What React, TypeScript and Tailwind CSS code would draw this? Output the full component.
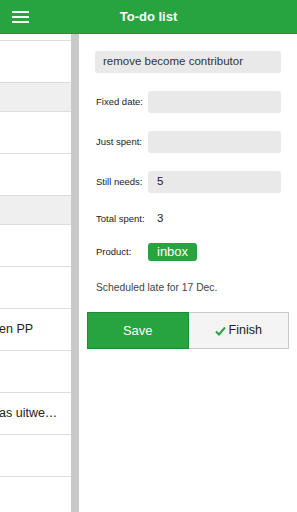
import React from "react";

type Row = { kind: "item" | "section"; text?: string };

const rows: Row[] = [
  { kind: "item" },
  { kind: "section" },
  { kind: "item" },
  { kind: "item" },
  { kind: "section" },
  { kind: "item" },
  { kind: "item" },
  { kind: "item", text: "en PP" },
  { kind: "item" },
  { kind: "item", text: "as uitwe…" },
  { kind: "item" },
  { kind: "item" },
  { kind: "item" },
];

const FieldRow: React.FC<{ label: string; value?: string; boxed?: boolean; className?: string }> = ({
  label,
  value,
  boxed,
  className = "",
}) => (
  <div className={`flex items-center h-[22px] ${className}`}>
    <div className="w-[53px] shrink-0 pl-[1px] text-[9.5px] text-[#222]">{label}</div>
    {boxed ? (
      <div className="flex-1 h-[22px] rounded-[3px] bg-[#e9e9e9] pl-[9px] flex items-center text-[11.5px] text-[#222]">
        {value}
      </div>
    ) : (
      <div className="pl-[9px] text-[11.5px] text-[#222]">{value}</div>
    )}
  </div>
);

export default function App() {
  return (
    <div className="w-[297px] h-[512px] flex flex-col overflow-hidden bg-white font-['Liberation_Sans',Arial,sans-serif]">
      {/* Header */}
      <header className="relative h-[34px] shrink-0 bg-[#27a33f] border-b border-[#23933a] flex items-center justify-center">
        <div className="absolute left-[12px] top-[11px] flex flex-col gap-[3px]">
          <span className="block w-[17px] h-[2px] bg-white" />
          <span className="block w-[17px] h-[2px] bg-white" />
          <span className="block w-[17px] h-[2px] bg-white" />
        </div>
        <span className="text-white text-[13px] font-bold">To-do list</span>
      </header>

      <div className="flex flex-1 min-h-0">
        {/* List */}
        <div className="w-[71px] shrink-0 overflow-hidden">
          <div className="h-[7px] border-b border-[#dddddd]" />
          {rows.map((r, i) =>
            r.kind === "section" ? (
              <div key={i} className="h-[29px] bg-[#efefef] border-b border-[#dddddd]" />
            ) : (
              <div
                key={i}
                className="h-[42px] border-b border-[#dddddd] flex items-center whitespace-nowrap text-[12.5px] text-[#222] -ml-[1px]"
              >
                {r.text}
              </div>
            )
          )}
        </div>

        {/* Separator */}
        <div className="w-[8px] shrink-0 bg-[#c9c9c9]" />

        {/* Detail panel */}
        <div className="flex-1 px-4 pt-[17px]">
          <div className="h-[22px] rounded-[3px] bg-[#e9e9e9] pl-[8px] flex items-center text-[11.5px] text-[#333]">
            remove become contributor
          </div>
          <FieldRow label="Fixed date:" boxed className="mt-[18px]" />
          <FieldRow label="Just spent:" boxed className="mt-[18px]" />
          <FieldRow label="Still needs:" value="5" boxed className="mt-[18px]" />
          <FieldRow label="Total spent:" value="3" className="mt-[15px]" />
          <div className="flex items-center h-[22px] mt-[11px]">
            <div className="w-[53px] shrink-0 pl-[1px] text-[9.5px] text-[#222]">Product:</div>
            <span className="h-[18px] px-[9px] rounded-[3px] bg-[#27a33f] text-white text-[13px] flex items-center">
              inbox
            </span>
          </div>
          <div className="mt-[18px] pl-[1px] h-[14px] leading-[14px] text-[10.3px] text-[#444]">
            Scheduled late for 17 Dec.
          </div>
          <div className="-mx-2 mt-[17px] flex h-[37px]">
            <button className="flex-1 bg-[#27a33f] border border-[#1e8a33] text-white text-[13px] flex items-center justify-center">
              Save
            </button>
            <button className="flex-1 bg-[#f4f4f4] border border-l-0 border-[#c8c8c8] text-[#222] text-[12.5px] flex items-center justify-center gap-[3px]">
              <svg width="11" height="10" viewBox="0 0 11 10" fill="none">
                <path d="M1 5.5L4 8.5L10 1.5" stroke="#2aa43f" strokeWidth="2" />
              </svg>
              Finish
            </button>
          </div>
        </div>
      </div>
    </div>
  );
}
